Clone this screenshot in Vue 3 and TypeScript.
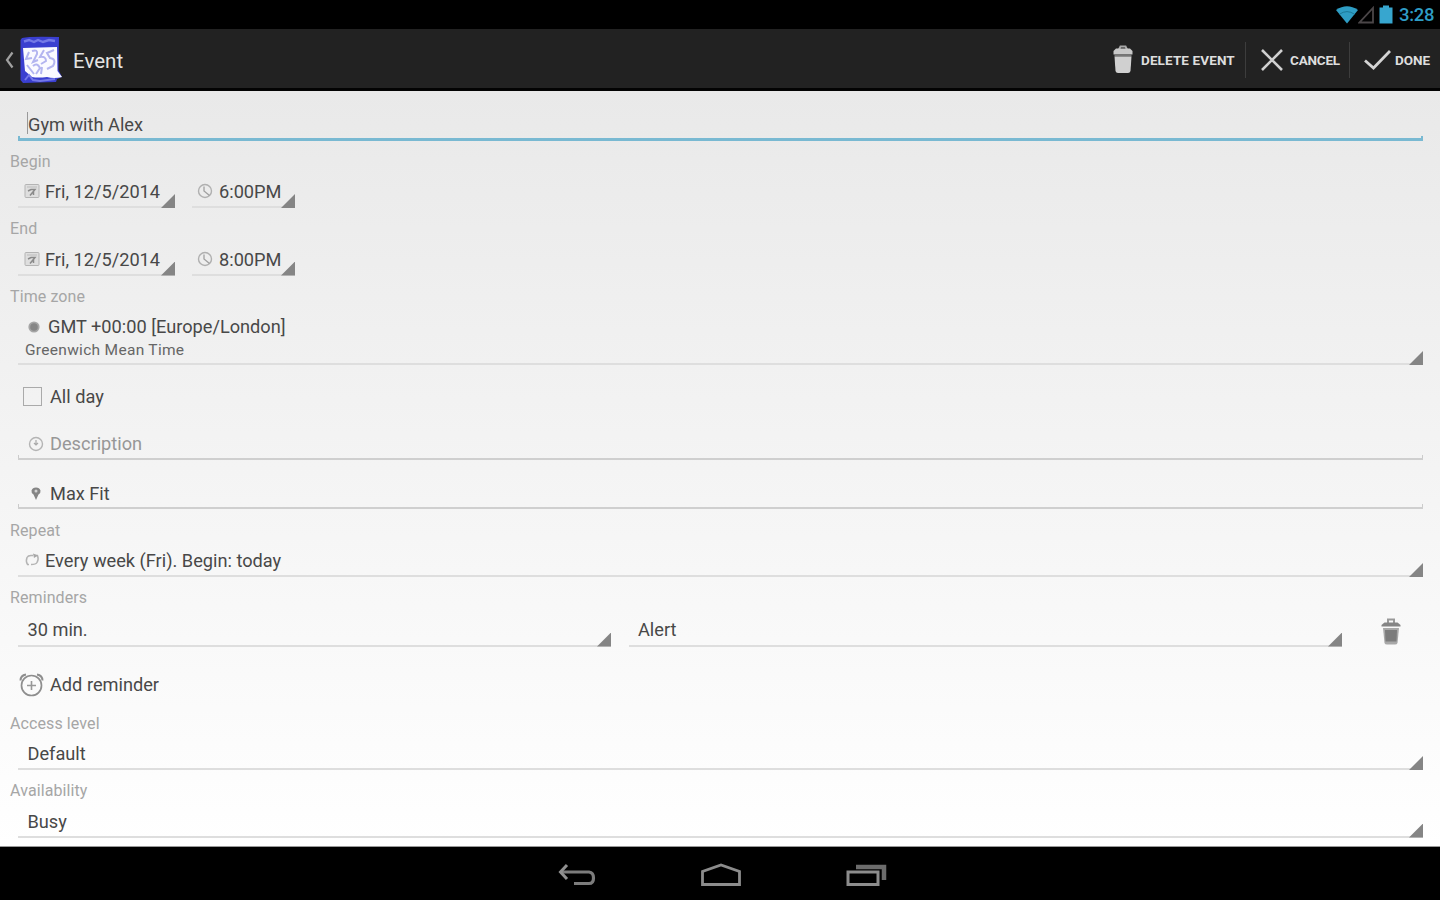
<script setup lang="ts">
interface Moment {
  label: string
  date: string
  time: string
}

interface Choice {
  label: string
  value: string
}

const moments: Moment[] = [
  { label: 'Begin', date: 'Fri, 12/5/2014', time: '6:00PM' },
  { label: 'End', date: 'Fri, 12/5/2014', time: '8:00PM' },
]

const choices: Choice[] = [
  { label: 'Access level', value: 'Default' },
  { label: 'Availability', value: 'Busy' },
]
</script>

<template>
  <div class="screen">
    <div class="status">
      <svg class="wifi" width="22" height="18" viewBox="0 0 22 18">
        <path d="M0 4Q11-3.5 22 4L11 17.5Z" fill="#2e9dc4" />
        <path d="M3.5 8.2Q11 3 18.5 8.2" fill="none" stroke="#1a7898" stroke-width="1" />
      </svg>
      <svg class="signal" width="17" height="18" viewBox="0 0 17 18">
        <path d="M1.5 16.5H15V2Z" fill="none" stroke="#4b4648" stroke-width="1.8" />
      </svg>
      <svg class="battery" width="14" height="19" viewBox="0 0 14 19">
        <path d="M0.5 2.5H4V0.5H10V2.5H13.5V18.5H0.5Z" fill="#37a6cf" />
      </svg>
      <span class="clock">3:28</span>
    </div>

    <header class="bar">
      <svg class="up" width="9" height="18" viewBox="0 0 9 18">
        <path d="M7.5 1.5L2 9L7.5 16.5" fill="none" stroke="#a0a0a0" stroke-width="2.200" />
      </svg>
      <svg class="logo" width="43" height="48" viewBox="0 0 43 48">
        <path d="M2 2Q10 0 39 1L38.500 34L42 41L37 43L36 46L3 47L0.500 44L0.500 4Z" fill="#3a3fd0" />
        <path d="M4 5.500L9 4L14 6L18 4L23 6L29 4L35 5" fill="none" stroke="#7479e6" stroke-width="2.400" />
        <path d="M3 12L37 11L37.500 35L42 41Q34 43 27 41Q18 42 12 41L5 35Z" fill="#fafaff" />
        <path d="M9 16L6 23L12 22M12 15Q18 13 17 18L13 26L18 24M24 14L20 21Q26 20 26 25L21 28M34 14L27 17L30 22Q37 23 33 30L27 33M7 29L14 38M13 30Q17 26 20 32L16 38M22 31L21 38" fill="none" stroke="#b3b5f0" stroke-width="2" />
        <path d="M5 44L9 39L13 44L20 45L35 43" fill="none" stroke="#7478e8" stroke-width="2" />
      </svg>
      <h1>Event</h1>
      <button class="action delete">
        <svg width="20" height="29" viewBox="0 0 20 29">
          <path d="M6 4.500L7.500 1.500H12.500L14 4.500" fill="none" stroke="#a8a8a8" stroke-width="2" />
          <path d="M3 3.500H17L19.500 6V9.500H0.500V6Z" fill="#c8c8c8" />
          <path d="M1.500 9.500H18.500V11.500H1.500Z" fill="#777" />
          <path d="M1.500 11.500H18.500L17.500 26Q17 28 15 28H5Q3 28 2.500 26Z" fill="#d0d0d0" />
        </svg>
        <span>DELETE EVENT</span>
      </button>
      <button class="action cancel">
        <svg width="22" height="22" viewBox="0 0 22 22">
          <path d="M1 1L21 21M21 1L1 21" fill="none" stroke="#d0d0d0" stroke-width="2.600" />
        </svg>
        <span>CANCEL</span>
      </button>
      <button class="action done">
        <svg width="27" height="20" viewBox="0 0 27 20">
          <path d="M1 10.500L9.500 18L26 1" fill="none" stroke="#d4d4d4" stroke-width="2.800" />
        </svg>
        <span>DONE</span>
      </button>
    </header>

    <main>
      <section class="title-row">
        <div class="edit focused"><i class="caret"></i><span>Gym with Alex</span></div>
      </section>

      <section v-for="m in moments" :key="m.label" class="group">
        <h2>{{ m.label }}</h2>
        <div class="pair">
          <div class="spinner date">
            <svg width="16" height="16" viewBox="0 0 16 16">
              <rect x="1" y="1.500" width="14" height="13" rx="1" fill="#dedede" stroke="#b4b4b4" />
              <path d="M3 4H13" stroke="#bcbcbc" />
              <path d="M4 8L7 6.500H11L8.500 9.500L6 12.500M9.500 8V12" fill="none" stroke="#8a8a8a" stroke-width="1.500" />
            </svg>
            <span>{{ m.date }}</span>
          </div>
          <div class="spinner time">
            <svg width="16" height="16" viewBox="0 0 16 16">
              <circle cx="8" cy="8" r="6.500" fill="none" stroke="#b0b0b0" stroke-width="1.400" />
              <path d="M7 3.500V8L12.500 12.500" fill="none" stroke="#a0a0a0" stroke-width="1.300" />
            </svg>
            <span>{{ m.time }}</span>
          </div>
        </div>
      </section>

      <section class="group zone">
        <h2>Time zone</h2>
        <div class="spinner">
          <div class="zone-name">
            <svg width="12" height="12" viewBox="0 0 12 12">
              <circle cx="6" cy="6" r="5.600" fill="#a5a5a5" />
              <circle cx="6" cy="6" r="3.800" fill="#858585" />
            </svg>
            <span>GMT +00:00 [Europe/London]</span>
          </div>
          <small>Greenwich Mean Time</small>
        </div>
      </section>

      <section class="all-day">
        <i class="checkbox"></i>
        <span>All day</span>
      </section>

      <section class="edit-row description">
        <div class="edit">
          <svg width="16" height="16" viewBox="0 0 16 16">
            <circle cx="8" cy="8" r="6.500" fill="none" stroke="#b4b4b4" stroke-width="1.400" />
            <path d="M8 4V9M6 7L8 9L10 7" fill="none" stroke="#a8a8a8" stroke-width="1.200" />
          </svg>
          <span class="hint">Description</span>
        </div>
      </section>

      <section class="edit-row location">
        <div class="edit">
          <svg width="16" height="16" viewBox="0 0 16 16">
            <path d="M8 14L5.500 8.500Q3 6.500 3.500 4.500Q4.500 1.500 8 1.500Q11.500 1.500 12.500 4.500Q13 6.500 10.500 8.500Z" fill="#858585" />
            <circle cx="8" cy="5" r="1.500" fill="#d2d2d2" />
          </svg>
          <span>Max Fit</span>
        </div>
      </section>

      <section class="group">
        <h2>Repeat</h2>
        <div class="spinner">
          <svg width="16" height="14" viewBox="0 0 16 14">
            <path d="M5 11.500H3.500Q1.500 8 3 4.500Q4 2.500 7 2.500H9M10 2.500H13.500Q15 6 13 9.500Q12 11.500 7 11.500" fill="none" stroke="#b4b4b4" stroke-width="1.500" />
            <path d="M9 0.500L14 2.500L10 5Z" fill="#a8a8a8" />
          </svg>
          <span>Every week (Fri). Begin: today</span>
        </div>
      </section>

      <section class="group reminders">
        <h2>Reminders</h2>
        <div class="pair">
          <div class="spinner plain minutes"><span>30 min.</span></div>
          <div class="spinner plain method"><span>Alert</span></div>
          <svg class="trash" width="20" height="27" viewBox="0 0 20 27">
            <path d="M7 5V1.500H13V5" fill="none" stroke="#999" stroke-width="2" />
            <path d="M3.500 4.500H16.500L19.500 7V8.500H0.500V7Z" fill="#858585" />
            <path d="M2 10H18L16.500 25Q16 26.500 14 26.500H6Q4 26.500 3.500 25Z" fill="#a8a8a8" />
            <path d="M4 12H16L15.500 23.500H4.500Z" fill="#7c7c7c" />
          </svg>
        </div>
      </section>

      <section class="add">
        <svg width="26" height="26" viewBox="0 0 26 26">
          <circle cx="13.500" cy="13.500" r="10" fill="none" stroke="#8e8e8e" stroke-width="1.700" />
          <path d="M13.500 9V18M9 13.500H18" stroke="#989898" stroke-width="1.600" />
          <path d="M2.500 8.500Q2.500 3.500 8 2.500M24.500 8.500Q24.500 3.500 19 2.500" fill="none" stroke="#8e8e8e" stroke-width="2" />
        </svg>
        <span>Add reminder</span>
      </section>

      <section v-for="c in choices" :key="c.label" class="group">
        <h2>{{ c.label }}</h2>
        <div class="spinner plain"><span>{{ c.value }}</span></div>
      </section>
    </main>

    <nav>
      <svg width="38" height="24" viewBox="0 0 38 24">
        <path d="M4 9H31Q35.500 9.500 35.500 15Q35.500 20.500 31 20.500H16" fill="none" stroke="#7c7c7c" stroke-width="3.200" />
        <path d="M9 2L2.500 9L9 16" fill="none" stroke="#909090" stroke-width="3" />
      </svg>
      <svg width="42" height="24" viewBox="0 0 42 24">
        <path d="M2.500 21.500V8.500L21 2L39.500 8.500V21.500Z" fill="none" stroke="#8c8c8c" stroke-width="2.800" />
      </svg>
      <svg width="42" height="24" viewBox="0 0 42 24">
        <path d="M2 9H32V21.500H2Z" fill="none" stroke="#8c8c8c" stroke-width="3" />
        <path d="M10 4H38V17" fill="none" stroke="#6c6c6c" stroke-width="4.500" />
      </svg>
    </nav>
  </div>
</template>

<style>
body {
  margin: 0;
  background: #000;
}
</style>

<style scoped>
* {
  box-sizing: border-box;
}

.screen {
  width: 1440px;
  height: 900px;
  display: flex;
  flex-direction: column;
  overflow: hidden;
  font-family: Roboto, "Liberation Sans", sans-serif;
  font-size: 18.2px;
  line-height: 20px;
  color: #484848;
  white-space: nowrap;
}

svg {
  display: block;
  flex: none;
}

.status {
  height: 29px;
  flex: none;
  display: flex;
  align-items: center;
  justify-content: flex-end;
  padding-right: 6px;
  background: #000;
}

.battery {
  margin: 0 6px 0 4px;
}

.clock {
  width: 35px;
  padding-top: 1px;
  font-size: 18.5px;
  font-weight: 500;
  letter-spacing: -0.3px;
  color: #2e9dc6;
}

.bar {
  height: 62px;
  flex: none;
  display: flex;
  align-items: center;
  background: #222;
  border-bottom: 3px solid #030303;
}

.up {
  margin: 2px 0 0 5px;
}

.logo {
  margin: 2px 0 0 6px;
}

h1 {
  margin: 4px auto 0 10px;
  font-size: 20.5px;
  font-weight: 400;
  color: #e4e4e4;
  line-height: 24px;
}

.action {
  height: 36px;
  display: flex;
  align-items: center;
  margin: 2px 0 0;
  padding: 0;
  border: 0;
  background: none;
  font: 700 13.5px/18px Roboto, "Liberation Sans", sans-serif;
  color: #dedede;
}

.action span {
  padding-top: 1px;
}

.delete {
  width: 132px;
  gap: 8px;
}

.delete span {
  letter-spacing: 0.12px;
}

.cancel {
  width: 104px;
  padding-left: 15px;
  gap: 7px;
  border-left: 1px solid #3d3d3d;
}

.cancel span {
  letter-spacing: -0.2px;
}

.done {
  width: 91px;
  padding-left: 14px;
  gap: 4px;
  border-left: 1px solid #3d3d3d;
}

main {
  height: 756px;
  flex: none;
  display: flex;
  flex-direction: column;
  overflow: hidden;
  background: linear-gradient(#e9e9e9, #fff);
  border-bottom: 1px solid #999;
}

section {
  flex: none;
  padding: 0 17px 0 18px;
}

.title-row {
  height: 60px;
  padding-top: 21px;
}

.edit {
  position: relative;
  display: flex;
  align-items: center;
  gap: 6px;
  height: 100%;
  padding: 1px 0 0 10px;
  border-bottom: 2px solid #cfcfcf;
}

.edit::before,
.edit::after {
  content: "";
  position: absolute;
  bottom: 0;
  width: 1px;
  height: 3px;
  background: #cbcbcb;
}

.edit::before {
  left: 0;
}

.edit::after {
  right: 0;
}

.focused {
  height: 29px;
  padding: 0 0 1px 9px;
  gap: 0;
  border-bottom: 3px solid #79b9d2;
}

.focused::before,
.focused::after {
  width: 2px;
  height: 2px;
  background: #79b9d2;
}

.caret {
  width: 1px;
  height: 22px;
  margin-top: -3px;
  background: #999;
}

.group {
  height: 67.5px;
}

h2 {
  height: 20px;
  margin: 0 0 0 -8px;
  padding-top: 0.5px;
  font-size: 16px;
  font-weight: 400;
  letter-spacing: 0.1px;
  color: #a6a6a6;
}

.pair {
  display: flex;
}

.spinner {
  position: relative;
  display: flex;
  align-items: center;
  height: 37px;
  padding: 5px 0 0 6px;
  gap: 5px;
  border-bottom: 2px solid #dedede;
}

.spinner > span {
  padding-top: 2px;
}

.spinner::after {
  content: "";
  position: absolute;
  right: 0;
  bottom: -2px;
  width: 14px;
  height: 14px;
  background: #858585;
  clip-path: polygon(100% 0, 100% 100%, 0 100%);
}

.date {
  width: 157px;
}

.time {
  width: 103px;
  margin-left: 17px;
  padding-left: 5px;
}

.time span {
  margin-left: 1px;
}

.zone {
  height: 90px;
}

.zone .spinner {
  height: 59px;
  flex-direction: column;
  align-items: flex-start;
  gap: 3px;
  padding: 11px 0 0 7px;
}

.zone-name {
  display: flex;
  align-items: center;
  gap: 8px;
  padding-left: 3px;
}

small {
  font-size: 15.5px;
  letter-spacing: 0.3px;
  color: #666;
}

.all-day {
  display: flex;
  align-items: center;
  height: 40px;
  padding: 1px 0 0 23px;
}

.checkbox {
  width: 19px;
  height: 19px;
  margin: -1px 8px 0 0;
  border: 1px solid #aaa;
}

.edit-row.description {
  height: 54px;
  padding-top: 12px;
  padding-bottom: 10px;
}

.edit-row.location {
  height: 50px;
  padding-top: 9px;
  padding-bottom: 11px;
}

.hint {
  color: #979797;
}

.reminders {
  height: 69.5px;
}

.reminders .spinner {
  height: 39px;
}

.plain {
  padding-left: 9.5px;
}

.minutes {
  width: 593px;
}

.method {
  width: 713px;
  margin-left: 18px;
  padding-left: 9px;
}

.trash {
  margin: 10px 0 0 39px;
}

.add {
  height: 56px;
  display: flex;
  align-items: center;
  gap: 6px;
}

nav {
  height: 53px;
  flex: none;
  display: flex;
  justify-content: center;
  gap: 104px;
  padding: 16px 0 0 5px;
  background: #000;
}
</style>
